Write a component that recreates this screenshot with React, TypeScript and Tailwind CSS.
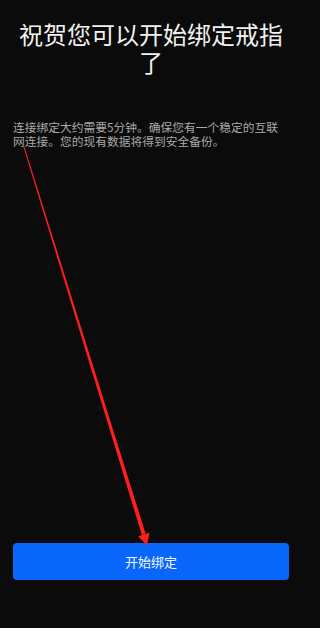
import React from "react";

export default function App() {
  return (
    <div className="w-full min-h-screen bg-[#0b0b0b]">
      <div
        className="relative w-[302px] h-[628px] bg-[#0b0b0b] flex flex-col overflow-hidden"
        style={{ fontFamily: '"Noto Sans CJK SC", "Noto Sans", sans-serif' }}
      >
        <h1 className="pt-[20px] px-[16px] text-center text-[24px] leading-[28px] font-normal text-[#f2f2f2]">
          祝贺您可以开始绑定戒指了
        </h1>
        <p className="mt-[44px] px-[13px] text-[11.75px] leading-[13.5px] text-[#a9a9a9]">
          连接绑定大约需要5分钟。确保您有一个稳定的互联网连接。您的现有数据将得到安全备份。
        </p>
        <div className="flex-1" />
        <div className="px-[13px] mb-[48px]">
          <button className="w-full h-[37px] rounded-[4px] bg-[#0866fb] text-[13px] text-[#f4f7ff] flex items-center justify-center">
            开始绑定
          </button>
        </div>
        <svg
          className="absolute left-0 top-0 pointer-events-none"
          width="302"
          height="628"
          viewBox="0 0 302 628"
        >
          <polygon
            points="24.48,146.85 23.52,147.15 141.9,535.1 145.7,533.9"
            fill="#ff1e1e"
          />
          <polygon points="138.1,536.3 149.5,532.7 147,545.5" fill="#ff1e1e" />
        </svg>
      </div>
    </div>
  );
}
